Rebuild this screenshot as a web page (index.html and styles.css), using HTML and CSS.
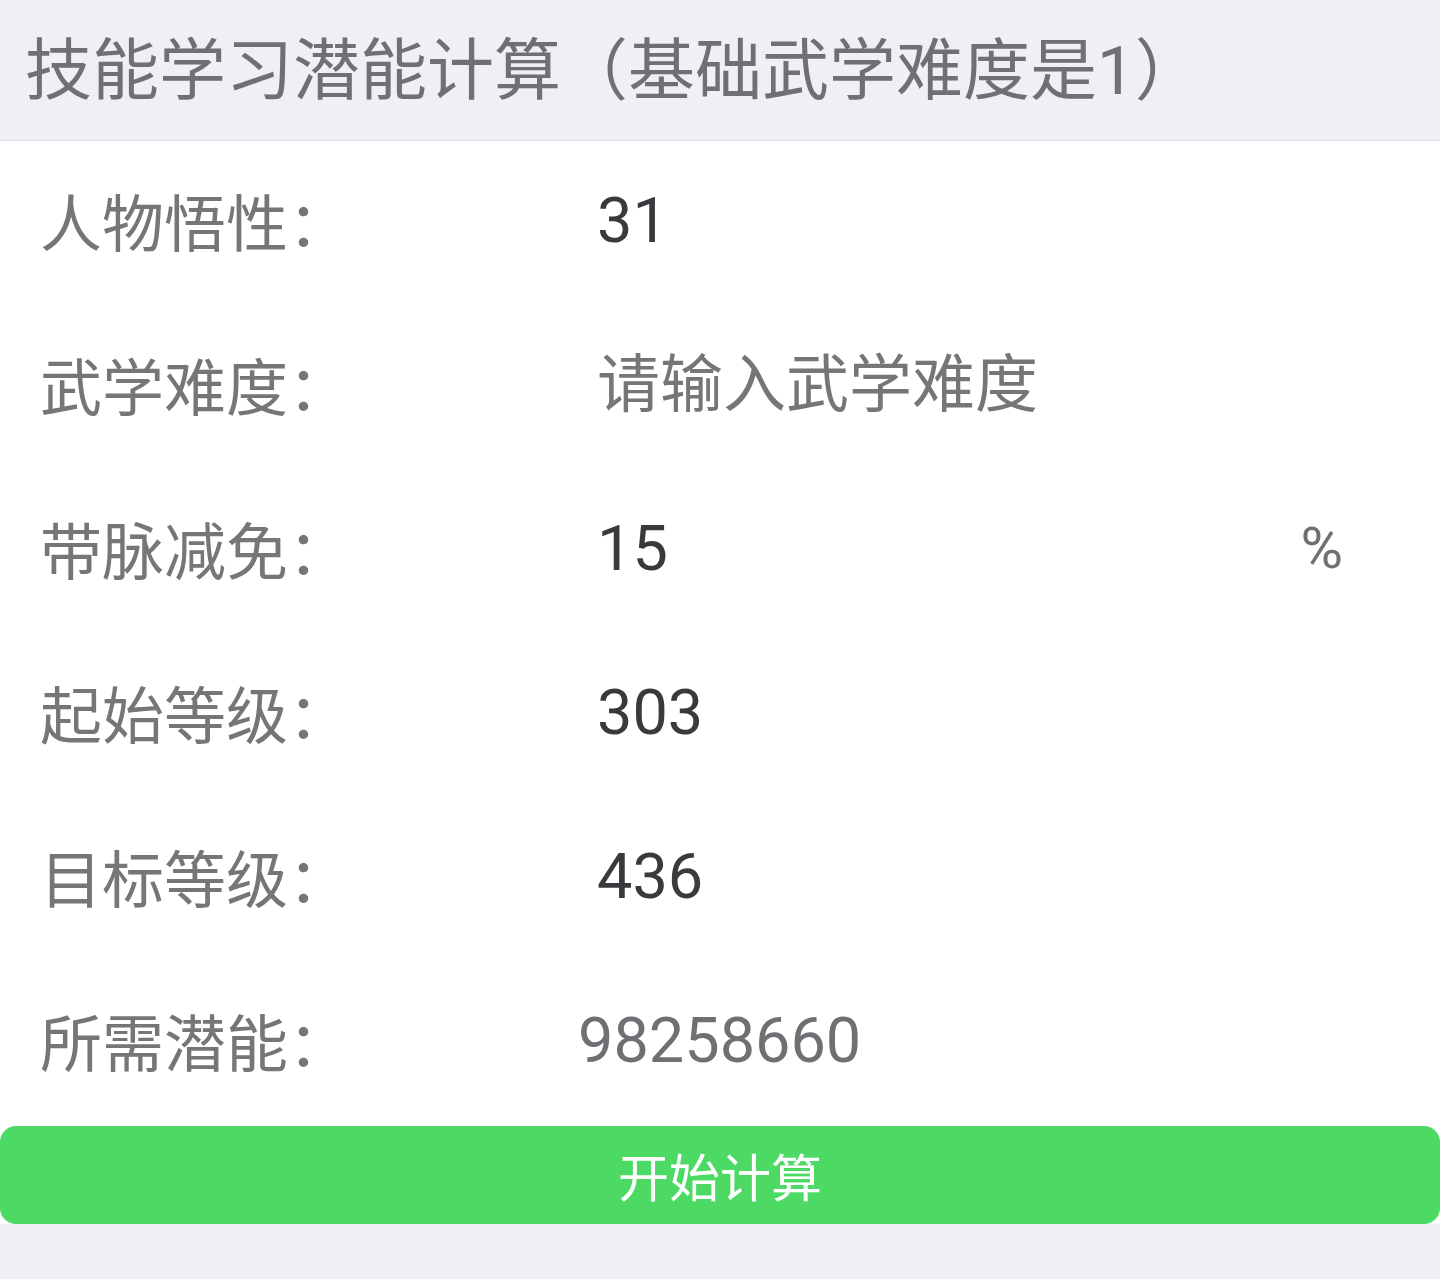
FILE: index.html
```html
<!DOCTYPE html>
<html lang="zh-CN">

<head>
    <meta charset="UTF-8" />
    <meta name="viewport" content="width=device-width, initial-scale=1.0" />
    <title>技能学习潜能计算</title>
    <link rel="stylesheet" href="styles.css">
</head>

<body class="page">
    <header class="top-bar">
        <h1 class="top-title">技能学习潜能计算（基础武学难度是1）</h1>
    </header>
    <main class="calc-form">
        <div class="calc-row">
            <label class="calc-label" for="wuxing-inp">人物悟性：</label>
            <input class="calc-inp" id="wuxing-inp" type="number" value="31" />
        </div>
        <div class="calc-row">
            <label class="calc-label" for="nandu-inp">武学难度：</label>
            <input class="calc-inp" id="nandu-inp" type="number" placeholder="请输入武学难度" />
        </div>
        <div class="calc-row">
            <label class="calc-label" for="daimai-inp">带脉减免：</label>
            <input class="calc-inp" id="daimai-inp" type="number" value="15" />
            <span class="calc-unit">%</span>
        </div>
        <div class="calc-row">
            <label class="calc-label" for="start-inp">起始等级：</label>
            <input class="calc-inp" id="start-inp" type="number" value="303" />
        </div>
        <div class="calc-row">
            <label class="calc-label" for="target-inp">目标等级：</label>
            <input class="calc-inp" id="target-inp" type="number" value="436" />
        </div>
        <div class="calc-row">
            <span class="calc-label">所需潜能：</span>
            <span class="calc-result" id="result-span">98258660</span>
        </div>
        <button class="calc-bttn" id="calc-bttn">开始计算</button>
    </main>
</body>

</html>
```

FILE: styles.css
```css
.page {
    margin: 0;
    background-color: rgb(239, 239, 244);
    font-family: Roboto, "Noto Sans CJK SC", sans-serif;
}

.top-bar {
    height: 140px;
    display: flex;
    align-items: center;
    padding-left: 25px;
    border-bottom: 1px solid rgb(222, 222, 226);
}

.top-title {
    margin: 0;
    margin-top: -12px;
    font-size: 67px;
    font-weight: 400;
    color: rgb(112, 112, 116);
    white-space: nowrap;
}

.calc-form {
    background-color: rgb(255, 255, 255);
}

.calc-row {
    height: 164px;
    box-sizing: border-box;
    display: flex;
    align-items: center;
    padding-left: 40px;
    padding-right: 97px;
    padding-bottom: 6px;
}

.calc-label {
    width: 538px;
    flex-shrink: 0;
    font-size: 62px;
    color: rgb(118, 118, 120);
}

.calc-inp {
    flex: 1;
    min-width: 0;
    border: 0;
    outline: none;
    padding: 0 0 0 19px;
    background: transparent;
    font-family: Roboto, "Noto Sans CJK SC", sans-serif;
    font-size: 63px;
    color: rgb(58, 58, 62);
    -moz-appearance: textfield;
}

.calc-inp::-webkit-outer-spin-button,
.calc-inp::-webkit-inner-spin-button {
    -webkit-appearance: none;
    margin: 0;
}

.calc-inp::placeholder {
    color: rgb(118, 118, 120);
    opacity: 1;
}

.calc-unit {
    font-size: 58px;
    color: rgb(112, 112, 116);
}

.calc-result {
    font-size: 63px;
    color: rgb(112, 112, 116);
}

.calc-bttn {
    display: block;
    width: 100%;
    height: 98px;
    margin-top: 1px;
    border: 0;
    border-radius: 16px;
    background-color: rgb(76, 217, 100);
    color: rgb(255, 255, 255);
    font-family: "Noto Sans CJK SC", sans-serif;
    font-size: 51px;
    cursor: pointer;
}
```
